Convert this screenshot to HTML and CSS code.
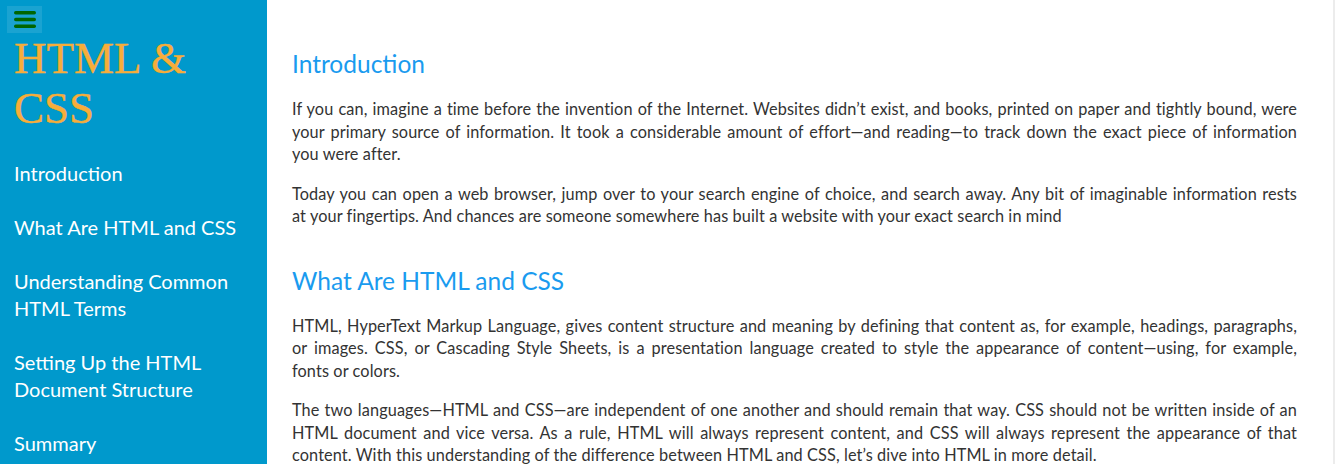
FILE: index.html
```html
<!DOCTYPE html>
<html lang="en">
<head>
<meta charset="utf-8">
<title>HTML &amp; CSS</title>
<link rel="stylesheet" href="styles.css">
</head>
<body>
<div class="page">
  <aside class="sidebar">
    <button class="menu-btn" aria-label="Menu">
      <svg width="22" height="17" viewBox="0 0 22 17"><rect x="0" y="0" width="22" height="3.4" rx="1.7"/><rect x="0" y="6.8" width="22" height="3.4" rx="1.7"/><rect x="0" y="13.6" width="22" height="3.4" rx="1.7"/></svg>
    </button>
    <h1 class="site-title">HTML &amp; CSS</h1>
    <nav class="toc">
      <a href="#intro">Introduction</a>
      <a href="#what">What Are HTML and CSS</a>
      <a href="#terms">Understanding Common HTML Terms</a>
      <a href="#setup">Setting Up the HTML Document Structure</a>
      <a href="#summary">Summary</a>
    </nav>
  </aside>
  <main class="content">
    <section id="intro" class="chapter">
      <h2 class="chapter-title">Introduction</h2>
      <p>If you can, imagine a time before the invention of the Internet. Websites didn’t exist, and books, printed on paper and tightly bound, were your primary source of information. It took a considerable amount of effort—and reading—to track down the exact piece of information you&nbsp;were after.</p>
      <p>Today you can open a web browser, jump over to your search engine of choice, and search away. Any bit of imaginable information rests at&nbsp;your fingertips. And chances are someone somewhere has built a website with your exact search in mind</p>
    </section>
    <section id="what" class="chapter">
      <h2 class="chapter-title">What Are HTML and CSS</h2>
      <p>HTML, HyperText Markup Language, gives content structure and meaning by defining that content as, for example, headings, paragraphs, or images. CSS, or Cascading Style Sheets, is a presentation language created to style the appearance of content—using, for example, fonts&nbsp;or colors.</p>
      <p>The two languages—HTML and CSS—are independent of one another and should remain that way. CSS should not be written inside of an HTML document and vice versa. As a rule, HTML will always represent content, and CSS will always represent the appearance of that content. With this understanding of the difference between HTML and CSS, let’s dive into HTML in more detail.</p>
    </section>
  </main>
</div>
</body>
</html>
```

FILE: styles.css
```css
html, body {
  margin: 0;
  padding: 0;
  height: 100%;
  overflow: hidden;
  background: #ffffff;
}

.page {
  display: flex;
  height: 100vh;
  font-family: Lato, "Open Sans", sans-serif;
}

.sidebar {
  flex: 0 0 267px;
  background: #0099cc;
  padding: 6px 10px 0 7px;
  box-sizing: border-box;
  display: flex;
  flex-direction: column;
  align-items: flex-start;
}

.menu-btn {
  width: 35px;
  height: 27px;
  border: 0;
  padding: 0;
  margin: 0;
  background: rgba(255, 255, 255, 0.1);
  display: flex;
  align-items: center;
  justify-content: center;
  cursor: pointer;
}

.menu-btn svg {
  display: block;
  fill: #006600;
}

.site-title {
  margin: 0 0 0 7px;
  font-family: "Liberation Serif", serif;
  font-weight: normal;
  font-size: 45px;
  line-height: 50px;
  color: #f7ad3a;
  -webkit-text-stroke: 0.4px #f7ad3a;
}

.toc {
  display: flex;
  flex-direction: column;
  gap: 27px;
  padding: 27px 0 0 7px;
}

.toc a {
  color: #ffffff;
  text-decoration: none;
  font-size: 20px;
  line-height: 27px;
}

.content {
  flex: 1 1 auto;
  padding: 11px 36px 0 25px;
  border-right: 2px solid #ececec;
  color: #333333;
  overflow: hidden;
}

.chapter-title {
  margin: 38px 0 19px;
  font-weight: normal;
  font-size: 24.5px;
  line-height: 30px;
  color: #1a9bef;
}

.content p {
  margin: 0 0 17px;
  font-size: 16.3px;
  letter-spacing: 0.1px;
  line-height: 22.5px;
  text-align: justify;
}
```
